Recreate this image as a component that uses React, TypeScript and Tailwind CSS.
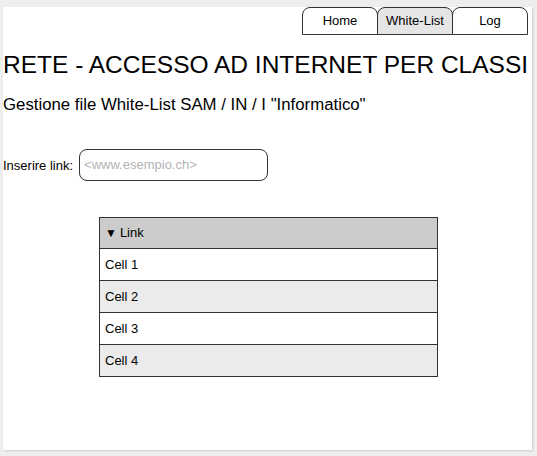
import React from "react";

export default function App() {
  const rows = ["Cell 1", "Cell 2", "Cell 3", "Cell 4"];
  return (
    <div className="w-[537px] h-[456px] bg-[#eeeeee] pt-[7px] pl-[3px]" style={{ fontFamily: '"Liberation Sans", Arial, sans-serif' }}>
      <div className="w-[529px] h-[443px] bg-white shadow-[1px_1px_2px_rgba(0,0,0,0.15)] flex flex-col text-black">
        <div className="flex justify-end pr-[4px]">
          {["Home", "White-List", "Log"].map((t, i) => (
            <div
              key={t}
              className={`w-[76px] h-[28px] border border-[#333] rounded-t-[8px] flex items-center justify-center text-[13px] ${i === 1 ? "bg-[#e5e5e5]" : "bg-white"} ${i > 0 ? "-ml-px" : ""}`}
            >
              {t}
            </div>
          ))}
        </div>
        <div className="text-[24.5px] leading-[27px] mt-[16px] whitespace-nowrap">RETE - ACCESSO AD INTERNET PER CLASSI</div>
        <div className="text-[16.8px] leading-[20px] mt-[17px] whitespace-nowrap">Gestione file White-List SAM / IN / I "Informatico"</div>
        <div className="flex items-center mt-[34px]">
          <span className="text-[13px] leading-[15px]">Inserire link:</span>
          <div className="ml-[6px] w-[189px] h-[32px] border border-[#333] rounded-[8px] flex items-center pl-[4px] text-[13px] text-[#b3b3b3]">
            &lt;www.esempio.ch&gt;
          </div>
        </div>
        <div className="ml-[96px] mt-[36px] w-[339px] border border-[#333] text-[13px]">
          <div className="h-[31px] bg-[#cccccc] flex items-center pl-[5px] border-b border-[#333]">
            <span className="text-[12px] mr-[3px]">▼</span>Link
          </div>
          {rows.map((r, i) => (
            <div
              key={r}
              className={`flex items-center pl-[5px] ${i % 2 === 1 ? "bg-[#ebebeb]" : "bg-white"} ${i < 3 ? "h-[32px] border-b border-[#333]" : "h-[31px]"}`}
            >
              {r}
            </div>
          ))}
        </div>
      </div>
    </div>
  );
}
